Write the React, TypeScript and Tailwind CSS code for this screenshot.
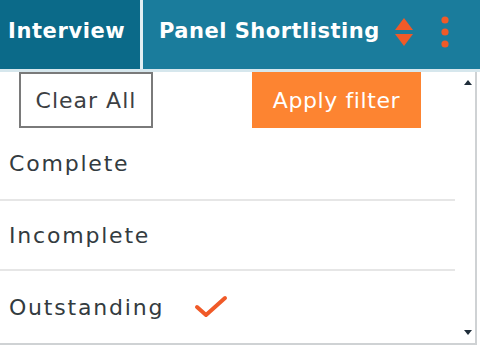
import React from 'react';

const FONT = "font-['DejaVu_Sans',_'Open_Sans',_sans-serif]";

function SortIcon() {
    return (
        <svg width="20" height="30" viewBox="0 0 20 30" className="shrink-0">
            <path d="M10 1 L19 13 H1 Z" fill="#f05a28" />
            <path d="M10 29 L19 17 H1 Z" fill="#f05a28" />
        </svg>
    );
}

function KebabIcon() {
    return (
        <svg width="10" height="32" viewBox="0 0 10 32" className="shrink-0">
            <circle cx="5" cy="4" r="3.6" fill="#f05a28" />
            <circle cx="5" cy="16" r="3.6" fill="#f05a28" />
            <circle cx="5" cy="28" r="3.6" fill="#f05a28" />
        </svg>
    );
}

function Check() {
    return (
        <svg width="34" height="24" viewBox="0 0 34 24" className="shrink-0">
            <path
                d="M3 12 L12 20 L31 3"
                fill="none"
                stroke="#f05a28"
                strokeWidth="4"
                strokeLinecap="round"
                strokeLinejoin="round"
            />
        </svg>
    );
}

type OptionProps = {
    label: string;
    checked?: boolean;
    height: string;
    divider?: boolean;
};

function Option({ label, checked, height, divider }: OptionProps) {
    return (
        <li
            className={`flex items-center gap-[30px] pl-[9px] ${height} ${divider ? 'border-b-2 border-[#e6e6e6]' : ''}`}
        >
            <span className="text-[22px] tracking-[1.8px] text-[#333b40]">{label}</span>
            {checked && <Check />}
        </li>
    );
}

export default function App() {
    return (
        <div className={`h-[345px] w-[480px] overflow-hidden bg-white ${FONT}`}>
            {/* Tab header */}
            <header className="flex h-[69px] bg-[#e3eff3]">
                <div className="flex w-[140px] items-center bg-[#0b6a89] pb-[5px] pl-[8px]">
                    <span className="text-[21px] font-bold tracking-[0.6px] text-white">
                        Interview
                    </span>
                </div>
                <div className="ml-[3px] flex flex-1 items-center bg-[#1a7c9c] pb-[5px] pl-[16px] pr-[30px]">
                    <span className="text-[21px] font-bold tracking-[0.5px] text-white">
                        Panel Shortlisting
                    </span>
                    <div className="ml-[14px]">
                        <SortIcon />
                    </div>
                    <div className="ml-auto">
                        <KebabIcon />
                    </div>
                </div>
            </header>
            <div className="h-[3px] bg-[#d6e7ed]" />

            {/* Filter dropdown */}
            <div className="flex h-[273px] w-[477px] border-r-2 border-b-2 border-[#cfd2d4]">
                <div className="flex-1 pr-[6px]">
                    <div className="flex h-[56px] items-center justify-between pl-[19px] pr-[34px]">
                        <button className="h-[56px] w-[134px] border-2 border-[#7a7a7a] text-[22px] tracking-[1px] text-[#3c4043]">
                            Clear All
                        </button>
                        <button className="h-[56px] w-[169px] bg-[#fd8431] text-[22px] tracking-[0.6px] text-white">
                            Apply filter
                        </button>
                    </div>
                    <ul>
                        <Option label="Complete" height="h-[73px]" divider />
                        <Option label="Incomplete" height="h-[70px]" divider />
                        <Option label="Outstanding" height="h-[72px]" checked />
                    </ul>
                </div>
                {/* Scrollbar */}
                <div className="flex w-[14px] flex-col items-center justify-between py-[8px]">
                    <svg width="8" height="5" viewBox="0 0 8 5">
                        <path d="M4 0 L8 5 H0 Z" fill="#1f2d3a" />
                    </svg>
                    <svg width="8" height="5" viewBox="0 0 8 5">
                        <path d="M0 0 H8 L4 5 Z" fill="#1f2d3a" />
                    </svg>
                </div>
            </div>
        </div>
    );
}
